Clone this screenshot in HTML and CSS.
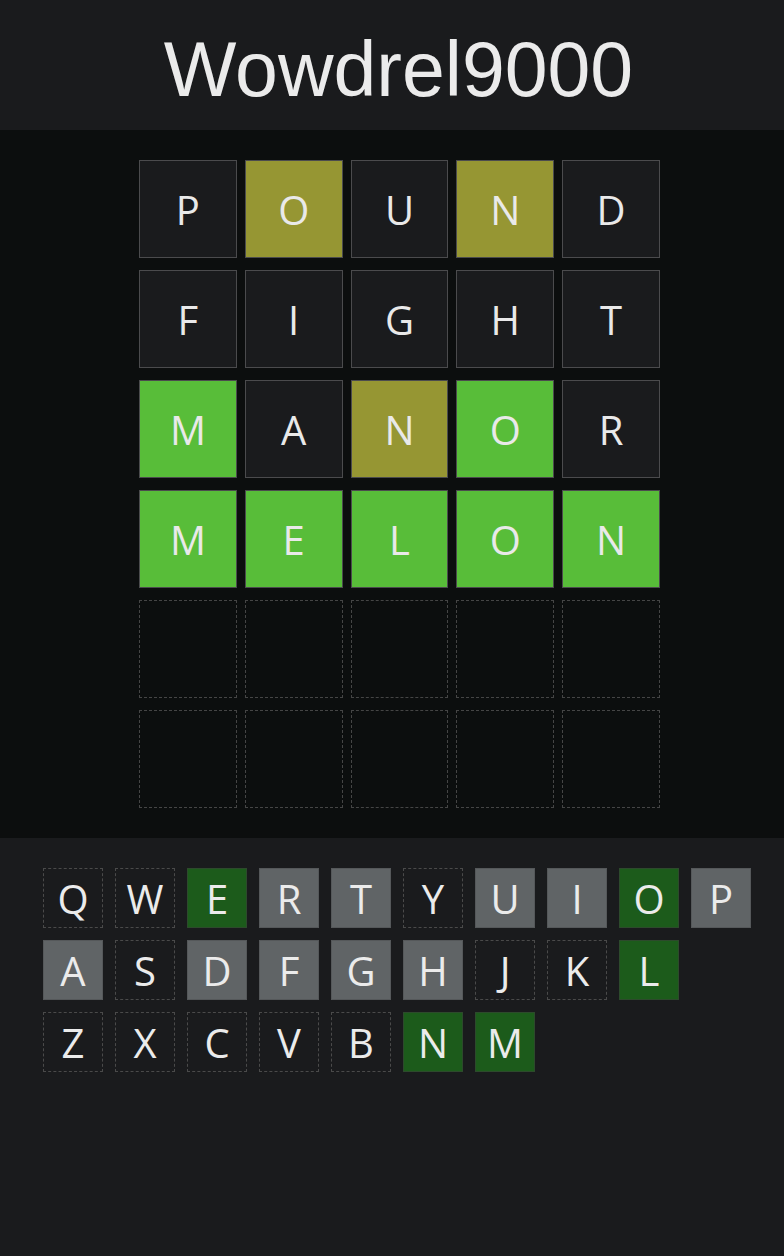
FILE: index.html
```html
<!DOCTYPE html>
<html>
<head>
<meta charset="utf-8">
<link rel="stylesheet" href="styles.css">
</head>
<body>
<header class="header"><h1 class="title">Wowdrel9000</h1></header>
<main class="board-area">
  <div class="board">
    <div class="row"><div class="tile">P</div><div class="tile present">O</div><div class="tile">U</div><div class="tile present">N</div><div class="tile">D</div></div>
    <div class="row"><div class="tile">F</div><div class="tile">I</div><div class="tile">G</div><div class="tile">H</div><div class="tile">T</div></div>
    <div class="row"><div class="tile correct">M</div><div class="tile">A</div><div class="tile present">N</div><div class="tile correct">O</div><div class="tile">R</div></div>
    <div class="row"><div class="tile correct">M</div><div class="tile correct">E</div><div class="tile correct">L</div><div class="tile correct">O</div><div class="tile correct">N</div></div>
    <div class="row"><div class="tile empty"></div><div class="tile empty"></div><div class="tile empty"></div><div class="tile empty"></div><div class="tile empty"></div></div>
    <div class="row"><div class="tile empty"></div><div class="tile empty"></div><div class="tile empty"></div><div class="tile empty"></div><div class="tile empty"></div></div>
  </div>
</main>
<section class="keyboard-area">
  <div class="keyboard">
    <div class="krow"><div class="key">Q</div><div class="key">W</div><div class="key hit">E</div><div class="key used">R</div><div class="key used">T</div><div class="key">Y</div><div class="key used">U</div><div class="key used">I</div><div class="key hit">O</div><div class="key used">P</div></div>
    <div class="krow"><div class="key used">A</div><div class="key">S</div><div class="key used">D</div><div class="key used">F</div><div class="key used">G</div><div class="key used">H</div><div class="key">J</div><div class="key">K</div><div class="key hit">L</div></div>
    <div class="krow"><div class="key">Z</div><div class="key">X</div><div class="key">C</div><div class="key">V</div><div class="key">B</div><div class="key hit">N</div><div class="key hit">M</div></div>
  </div>
</section>
</body>
</html>
```
FILE: styles.css
```css
html, body {
  margin: 0;
  padding: 0;
  background: #1a1b1d;
}
body {
  width: 784px;
  min-height: 1256px;
  font-family: "Open Sans", "Noto Sans", sans-serif;
  color: #e8e8e8;
}
.header {
  height: 130px;
  background: #1a1b1d;
  display: flex;
  align-items: center;
  justify-content: center;
  padding-left: 13px;
  padding-top: 8px;
  box-sizing: border-box;
}
.title {
  margin: 0;
  font-family: "Liberation Sans", Arial, sans-serif;
  font-weight: 400;
  font-size: 77px;
  line-height: 1;
  color: #ebebeb;
}
.board-area {
  background: #0c0e0e;
  padding: 30px 0;
  display: flex;
  justify-content: center;
  padding-left: 15px;
}
.board {
  display: flex;
  flex-direction: column;
  gap: 12px;
  width: 521px;
}
.row {
  display: grid;
  grid-template-columns: repeat(5, 1fr);
  gap: 8px;
}
.tile {
  height: 98px;
  box-sizing: border-box;
  border: 1px solid #4b4b4d;
  background: #1a1b1d;
  display: flex;
  align-items: center;
  justify-content: center;
  font-size: 40px;
  line-height: 1;
  padding-top: 2px;
  color: #e9e9e9;
}
.tile.present { background: #969633; }
.tile.correct { background: #58bd39; }
.tile.empty {
  background: #0c0e0e;
  border: 1px dashed #454545;
}
.keyboard-area {
  background: #1a1b1d;
  padding: 30px 0 0 43px;
}
.keyboard {
  display: flex;
  flex-direction: column;
  gap: 12px;
}
.krow {
  display: flex;
  gap: 12px;
}
.key {
  width: 60px;
  height: 60px;
  box-sizing: border-box;
  border: 1px dashed #4a4a4a;
  background: #1a1b1d;
  display: flex;
  align-items: center;
  justify-content: center;
  font-size: 40px;
  line-height: 1;
  padding-top: 2px;
  color: #ebebeb;
}
.key.used {
  background: #606466;
  border: 1px solid #55585a;
}
.key.hit {
  background: #1c5b1b;
  border: 1px solid #2d4a2c;
}
```
